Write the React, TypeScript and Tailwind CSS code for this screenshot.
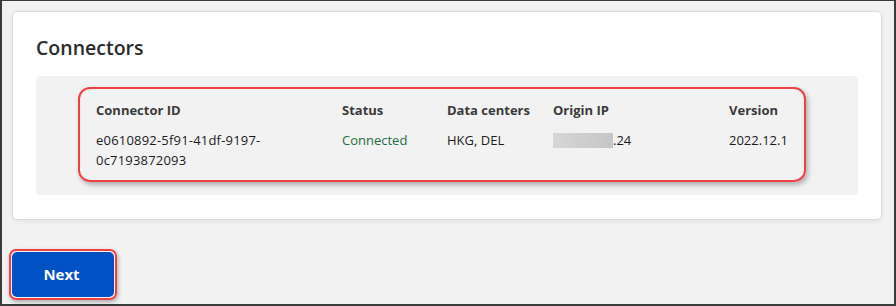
import React from "react";

export default function App() {
  const font = { fontFamily: '"Open Sans", "Noto Sans", sans-serif' };
  return (
    <div
      className="w-[896px] h-[306px] bg-[#f2f2f2] border-[#3b3b3b] border-t border-l-2 border-r-2 border-b-2 pl-[10px] pr-[12px] pt-[10px]"
      style={font}
    >
      <div className="bg-white rounded-[5px] border border-[#dcdcdc] shadow-[0_1px_4px_rgba(0,0,0,0.08)] pt-[22px] pb-[24px] px-[23px]">
        <h2 className="text-[19.5px] leading-[28px] font-semibold text-[#2b2b2b]">
          Connectors
        </h2>
        <div className="mt-[14px] bg-[#f2f2f2] rounded-[4px] h-[119px] pl-[42px] pt-[11px]">
          <div className="w-[728px] rounded-[12px] border-2 border-[#ef4046] shadow-[2px_3px_5px_rgba(0,0,0,0.28)] pl-[16px] pt-[11px] pb-[10px] text-[13px] leading-[20px] text-[#1b1b1b]">
            <div className="grid grid-cols-[246px_105px_106px_176px_1fr] font-bold text-[#3a3a3a]">
              <div>Connector ID</div>
              <div>Status</div>
              <div>Data centers</div>
              <div>Origin IP</div>
              <div>Version</div>
            </div>
            <div className="grid grid-cols-[246px_105px_106px_176px_1fr] items-start mt-[10px]">
              <div className="tracking-[0.2px]">
                e0610892-5f91-41df-9197-
                <br />
                0c7193872093
              </div>
              <div className="text-[#1e6e3c]">Connected</div>
              <div>HKG, DEL</div>
              <div className="flex items-center h-[20px]">
                <span className="inline-block w-[60px] h-[15px] bg-gradient-to-r from-[#d6d6d6] to-[#c6c6c6]" />
                <span>.24</span>
              </div>
              <div>2022.12.1</div>
            </div>
          </div>
        </div>
      </div>
      <div className="mt-[29px] ml-[-3px] inline-block rounded-[7px] border-2 border-[#ef4046] p-px shadow-[1px_2px_4px_rgba(0,0,0,0.3)]">
        <button className="w-[102px] h-[45px] pr-[3px] rounded-[5px] bg-[#0051c3] text-white text-[15px] font-bold">
          Next
        </button>
      </div>
    </div>
  );
}
